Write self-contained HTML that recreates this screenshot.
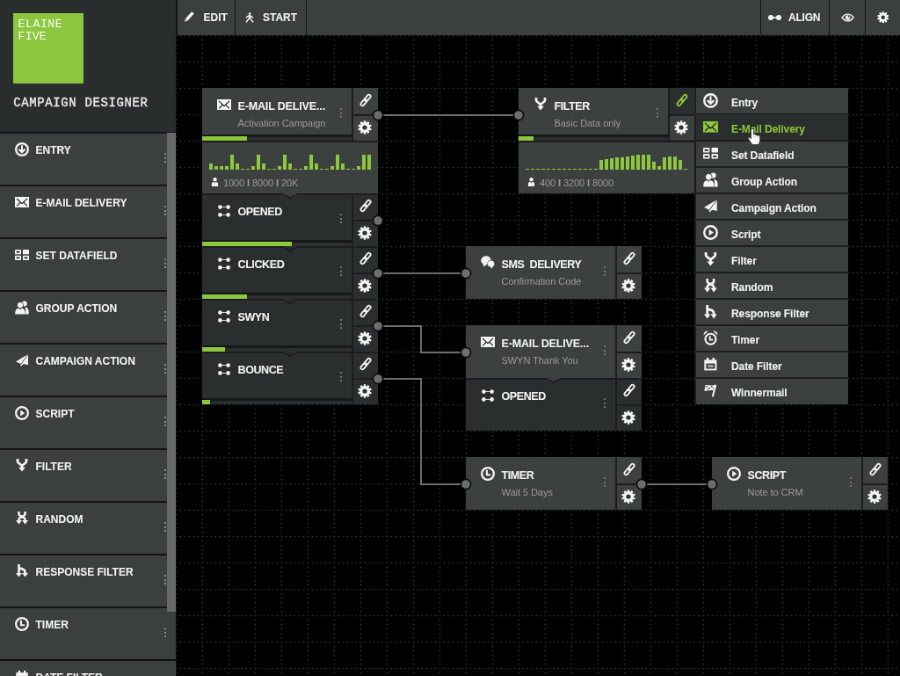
<!DOCTYPE html>
<html><head><meta charset="utf-8"><style>
html,body{margin:0;padding:0;width:900px;height:676px;overflow:hidden;background:#000}
#root{position:absolute;left:0;top:0;width:1024px;height:770px;transform:scale(0.87890625);transform-origin:0 0;will-change:transform;background:#000;font-family:"Liberation Sans",sans-serif}
.r,.t,.i{position:absolute}
.t{white-space:nowrap;line-height:1}
.b{-webkit-text-stroke:0.1px currentColor;text-shadow:0 0 1.2px rgba(0,0,0,.4)}
.i{overflow:visible}
</style></head><body>

<svg width="0" height="0" style="position:absolute">
<defs>
<symbol id="entry" viewBox="0 0 16 16"><circle cx="8" cy="8" r="6.85" fill="none" stroke="currentColor" stroke-width="2.3"/><path d="M8 3.2V11.2" fill="none" stroke="currentColor" stroke-width="2"/><path d="M4.4 7.7L8 11.3L11.6 7.7" fill="none" stroke="currentColor" stroke-width="2.2" stroke-linejoin="miter"/></symbol>
<symbol id="mail" viewBox="0 0 16 12"><rect x="0" y="0" width="16" height="12" fill="currentColor"/><path d="M2 1.8L8 7.6L14 1.8M2.2 10.4L6.2 6.2M13.8 10.4L9.8 6.2" fill="none" stroke="#1e1e1e" stroke-width="1.15"/></symbol>
<symbol id="datafield" viewBox="0 0 16 12"><g fill="currentColor"><rect x="0" y="0" width="7" height="5.3" rx="0.6"/><rect x="9" y="0" width="7" height="5.3" rx="0.6"/><rect x="0" y="6.7" width="7" height="5.3" rx="0.6"/><rect x="9" y="6.7" width="7" height="5.3" rx="0.6"/></g><g fill="#333736"><rect x="1.6" y="1.7" width="3.8" height="1.9"/><rect x="1.6" y="8.4" width="3.8" height="1.9"/><rect x="10.6" y="8.4" width="3.8" height="1.9"/></g></symbol>
<symbol id="group" viewBox="0 0 16 16"><g fill="currentColor"><circle cx="10.8" cy="3.4" r="3"/><path d="M11.5 7.8C14.5 7.8 15.8 9.5 15.8 15.5H12.2V10Z"/></g><circle cx="6" cy="5" r="3.8" fill="#3b3f3e"/><g fill="currentColor"><circle cx="6" cy="5" r="3.1"/><path d="M0.2 15.6C0.2 10.2 1.5 8.8 6 8.8S11.8 10.2 11.8 15.6Z"/></g><path d="M4.8 9L6 10.6L7.2 9Z" fill="#3b3f3e"/></symbol>
<symbol id="plane" viewBox="0 0 14 14"><path d="M0 8.6L14 0V12.2L8.8 11L5.8 14L4.8 10.6Z" fill="currentColor"/><path d="M14 0L5.3 12" stroke="#3b3f3e" stroke-width="0.9"/></symbol>
<symbol id="script" viewBox="0 0 16 16"><circle cx="8" cy="8" r="6.85" fill="none" stroke="currentColor" stroke-width="2.3"/><path d="M6.2 4.6V11.4L11.3 8Z" fill="currentColor"/></symbol>
<symbol id="filter" viewBox="0 0 14 15"><path d="M2 0V3C2 5.6 7 6.2 7 8.8V12.2M12 0V3C12 5.6 7 6.2 7 8.8" fill="none" stroke="currentColor" stroke-width="2.7"/><path d="M3.2 9.8L7 14.6L10.8 9.8Z" fill="currentColor"/></symbol>
<symbol id="random" viewBox="0 0 14 15"><path d="M3.5 0V3C3.5 5.6 10.5 6.2 10.5 8.8V11.5M10.5 0V3C10.5 5.6 3.5 6.2 3.5 8.8V11.5" fill="none" stroke="currentColor" stroke-width="2.5"/><path d="M0 10L3.5 14.6L7 10ZM7 10L10.5 14.6L14 10Z" fill="currentColor"/></symbol>
<symbol id="response" viewBox="0 0 14 15"><path d="M3.5 0V11.5M3.5 4.6C8.5 5 10.5 6.4 10.5 8.8V11.5" fill="none" stroke="currentColor" stroke-width="2.6"/><path d="M0 10L3.5 14.6L7 10ZM7 10L10.5 14.6L14 10Z" fill="currentColor"/></symbol>
<symbol id="timer" viewBox="0 0 16 16"><circle cx="8" cy="8" r="6.85" fill="none" stroke="currentColor" stroke-width="2.3"/><path d="M6.9 3.8V9.3H11.2" fill="none" stroke="currentColor" stroke-width="2.1"/></symbol>
<symbol id="alarm" viewBox="0 0 16 16"><circle cx="8" cy="9.2" r="5.7" fill="none" stroke="currentColor" stroke-width="2"/><path d="M7.3 6V10H10.6" fill="none" stroke="currentColor" stroke-width="1.8"/><path d="M0.6 5.2A4 4 0 0 1 5.2 0.6Z M15.4 5.2A4 4 0 0 0 10.8 0.6Z" fill="currentColor"/></symbol>
<symbol id="calendar" viewBox="0 0 14 14"><rect x="0.3" y="2.2" width="13.4" height="11.5" fill="currentColor"/><rect x="2.8" y="0" width="2.2" height="3" fill="currentColor"/><rect x="9" y="0" width="2.2" height="3" fill="currentColor"/><rect x="2.2" y="6.2" width="9.6" height="5.6" fill="#3b3f3e"/><rect x="4" y="7.6" width="6" height="2.8" fill="currentColor" opacity="0.55"/></symbol>
<symbol id="winner" viewBox="0 0 14 14"><path d="M1.4 1.2C3.5 0.6 5.5 1.4 7.5 1.4S11 0.8 12.8 0.6L11.4 6.4C9.6 6.8 8 6.4 6.3 6.6S3 7.2 0.4 7.5Z" fill="currentColor"/><g fill="#3b3f3e"><rect x="2.2" y="2" width="1.5" height="1.5"/><rect x="5" y="3.6" width="1.5" height="1.5"/><rect x="7.6" y="2.2" width="1.5" height="1.5"/><rect x="9.6" y="4" width="1.3" height="1.3"/><rect x="3" y="5.2" width="1.2" height="1.2"/></g><path d="M12.6 0.8L9.2 13.6" stroke="currentColor" stroke-width="1.9"/></symbol>
<symbol id="link" viewBox="0 0 20 20"><g transform="rotate(-50 10 10)" fill="none" stroke="currentColor" stroke-width="2"><rect x="1.5" y="7.9" width="9.3" height="4.2" rx="2.1"/><rect x="9.2" y="7.9" width="9.3" height="4.2" rx="2.1"/></g></symbol>
<symbol id="gear" viewBox="0 0 16 16"><g fill="currentColor"><circle cx="8" cy="8" r="5.9"/><rect x="6.75" y="0.3" width="2.5" height="15.4" transform="rotate(0 8 8)"/><rect x="6.75" y="0.3" width="2.5" height="15.4" transform="rotate(36 8 8)"/><rect x="6.75" y="0.3" width="2.5" height="15.4" transform="rotate(72 8 8)"/><rect x="6.75" y="0.3" width="2.5" height="15.4" transform="rotate(108 8 8)"/><rect x="6.75" y="0.3" width="2.5" height="15.4" transform="rotate(144 8 8)"/></g><circle cx="8" cy="8" r="2.6" fill="#2f3332"/></symbol>
<symbol id="opened" viewBox="0 0 14 14"><g fill="currentColor"><circle cx="2.4" cy="2.6" r="2.3"/><circle cx="11.6" cy="2.6" r="2.3"/><circle cx="2.4" cy="11.4" r="2.3"/><circle cx="11.6" cy="11.4" r="2.3"/><rect x="2.5" y="2.2" width="9" height="0.8"/><rect x="2.5" y="11" width="9" height="0.8"/></g></symbol>
<symbol id="sms" viewBox="0 0 16 15"><ellipse cx="6" cy="5.3" rx="5.7" ry="5" fill="currentColor"/><path d="M2.6 8.5L3.2 12.6L6.8 9.8Z" fill="currentColor"/><circle cx="11.6" cy="9" r="4.3" fill="#3c403f"/><ellipse cx="11.6" cy="9" rx="3.8" ry="3.6" fill="currentColor"/><path d="M10.5 11.5L12.6 14.8L14.2 10.8Z" fill="currentColor"/></symbol>
<symbol id="person" viewBox="0 0 10 11"><circle cx="5" cy="2.5" r="2.45" fill="currentColor"/><path d="M1 11V8C1 6.3 2.2 5.5 3.4 5.5H6.6C7.8 5.5 9 6.3 9 8V11Z" fill="currentColor"/><path d="M4 5.5L5 7.2L6 5.5Z" fill="#3c403f"/><path d="M4.7 7.6H5.3V9H4.7Z" fill="#3c403f" opacity="0.5"/></symbol>
<symbol id="pencil" viewBox="0 0 11 12"><path d="M8.2 0.3L10.8 2.6L3.6 10.4L0.3 11.7L1 8.2Z" fill="currentColor"/><path d="M1.2 8.6L3.4 10.6" stroke="#3b403f" stroke-width="0.7"/></symbol>
<symbol id="walker" viewBox="0 0 10 12"><circle cx="5.1" cy="1.5" r="1.35" fill="currentColor"/><path d="M5 2.8V6.6" stroke="currentColor" stroke-width="1.9"/><path d="M4.8 3.6L0.9 5.8M5.2 3.6L8.9 6.2M4.9 6.3L1.1 11.3M5.1 6.3L9.1 11.4" fill="none" stroke="currentColor" stroke-width="1.5"/></symbol>
<symbol id="align" viewBox="0 0 15 6"><circle cx="3" cy="3" r="3" fill="currentColor"/><circle cx="12" cy="3" r="3" fill="currentColor"/><rect x="3" y="2.2" width="9" height="1.6" fill="currentColor"/></symbol>
<symbol id="eye" viewBox="0 0 16 10"><path d="M0.2 5C3 0.9 5.6 0.2 8 0.2S13 0.9 15.8 5C13 9.1 10.4 9.8 8 9.8S3 9.1 0.2 5Z" fill="currentColor"/><path d="M2.2 5C4.4 2.1 6.2 1.7 8 1.7S11.6 2.1 13.8 5C11.6 7.9 9.8 8.3 8 8.3S4.4 7.9 2.2 5Z" fill="#3b403f"/><circle cx="8" cy="5" r="2.9" fill="currentColor"/><circle cx="9.2" cy="3.9" r="1" fill="#3b403f"/></symbol>
<symbol id="hand" viewBox="0 0 14 18" preserveAspectRatio="none"><path d="M3.3 1.5C3.3 0 6.1 0 6.1 1.5V6.9C6.1 5.8 8.3 5.8 8.3 6.9V7.6C8.3 6.6 10.4 6.6 10.4 7.6V8.4C10.4 7.4 12.7 7.4 12.7 8.6V13C12.7 15.5 11.3 17.6 9.2 17.6H6.2C4.8 17.6 3.9 16.6 2.9 15.1L0.5 11.3C-0.1 10.3 1 9.2 2 10L3.3 11.4Z" fill="#fff" stroke="#1a1a1a" stroke-width="0.6"/><path d="M6.1 7.2V10.5M8.3 7.7V10.5M10.4 8.5V10.5" stroke="#aaa" stroke-width="0.5"/></symbol>
</defs>
</svg>

<div id="root">
<div class="r" style="left:0px;top:0px;width:200px;height:150px;background:#2a2d2d;"></div>
<div class="r" style="left:15px;top:15px;width:80px;height:80px;background:#8dc63f;"></div>
<div class="t" style="left:20.60px;top:21.14px;font-size:13.3px;font-weight:normal;color:#f8faf4;letter-spacing:0.45px;font-family:'Liberation Mono',monospace;">ELAINE</div>
<div class="t" style="left:20.60px;top:34.94px;font-size:13.3px;font-weight:normal;color:#f8faf4;letter-spacing:0.1px;font-family:'Liberation Mono',monospace;">FIVE</div>
<div class="t" style="left:15.20px;top:110.05px;font-size:14px;font-weight:normal;color:#ececec;letter-spacing:0.62px;font-family:'Liberation Mono',monospace;-webkit-text-stroke:0.35px #ececec;">CAMPAIGN DESIGNER</div>
<div class="r" style="left:0px;top:150px;width:200px;height:60px;background:#3b3f3e;"></div>
<div class="r" style="left:0px;top:149.95px;width:200px;height:1.95px;background:#141616;"></div>
<svg class="i" style="left:17.1px;top:161.9px;width:16px;height:16px;color:#f4f4f4;" viewBox="0 0 16 16"><use href="#entry"/></svg>
<div class="t b" style="left:40.50px;top:165.34px;font-size:12px;font-weight:bold;color:#f4f4f4;letter-spacing:0px;">ENTRY</div>
<div class="r" style="left:186.5px;top:174.0px;width:2px;height:2px;background:#8a8d8c;"></div>
<div class="r" style="left:186.5px;top:178.6px;width:2px;height:2px;background:#8a8d8c;"></div>
<div class="r" style="left:186.5px;top:183.2px;width:2px;height:2px;background:#8a8d8c;"></div>
<div class="r" style="left:0px;top:210px;width:200px;height:60px;background:#3b3f3e;"></div>
<div class="r" style="left:0px;top:209.95px;width:200px;height:1.95px;background:#141616;"></div>
<svg class="i" style="left:17.1px;top:223.9px;width:16px;height:12px;color:#f4f4f4;" viewBox="0 0 16 12"><use href="#mail"/></svg>
<div class="t b" style="left:40.50px;top:225.34px;font-size:12px;font-weight:bold;color:#f4f4f4;letter-spacing:0px;">E-MAIL DELIVERY</div>
<div class="r" style="left:186.5px;top:234.0px;width:2px;height:2px;background:#8a8d8c;"></div>
<div class="r" style="left:186.5px;top:238.6px;width:2px;height:2px;background:#8a8d8c;"></div>
<div class="r" style="left:186.5px;top:243.2px;width:2px;height:2px;background:#8a8d8c;"></div>
<div class="r" style="left:0px;top:270px;width:200px;height:60px;background:#3b3f3e;"></div>
<div class="r" style="left:0px;top:269.95px;width:200px;height:1.95px;background:#141616;"></div>
<svg class="i" style="left:17.1px;top:283.9px;width:16px;height:12px;color:#f4f4f4;" viewBox="0 0 16 12"><use href="#datafield"/></svg>
<div class="t b" style="left:40.50px;top:285.34px;font-size:12px;font-weight:bold;color:#f4f4f4;letter-spacing:0px;">SET DATAFIELD</div>
<div class="r" style="left:186.5px;top:294.0px;width:2px;height:2px;background:#8a8d8c;"></div>
<div class="r" style="left:186.5px;top:298.6px;width:2px;height:2px;background:#8a8d8c;"></div>
<div class="r" style="left:186.5px;top:303.2px;width:2px;height:2px;background:#8a8d8c;"></div>
<div class="r" style="left:0px;top:330px;width:200px;height:60px;background:#3b3f3e;"></div>
<div class="r" style="left:0px;top:329.95px;width:200px;height:1.95px;background:#141616;"></div>
<svg class="i" style="left:17.1px;top:341.9px;width:16px;height:16px;color:#f4f4f4;" viewBox="0 0 16 16"><use href="#group"/></svg>
<div class="t b" style="left:40.50px;top:345.34px;font-size:12px;font-weight:bold;color:#f4f4f4;letter-spacing:0px;">GROUP ACTION</div>
<div class="r" style="left:186.5px;top:354.0px;width:2px;height:2px;background:#8a8d8c;"></div>
<div class="r" style="left:186.5px;top:358.6px;width:2px;height:2px;background:#8a8d8c;"></div>
<div class="r" style="left:186.5px;top:363.2px;width:2px;height:2px;background:#8a8d8c;"></div>
<div class="r" style="left:0px;top:390px;width:200px;height:60px;background:#3b3f3e;"></div>
<div class="r" style="left:0px;top:389.95px;width:200px;height:1.95px;background:#141616;"></div>
<svg class="i" style="left:18.1px;top:402.9px;width:14px;height:14px;color:#f4f4f4;" viewBox="0 0 14 14"><use href="#plane"/></svg>
<div class="t b" style="left:40.50px;top:405.34px;font-size:12px;font-weight:bold;color:#f4f4f4;letter-spacing:0px;">CAMPAIGN ACTION</div>
<div class="r" style="left:186.5px;top:414.0px;width:2px;height:2px;background:#8a8d8c;"></div>
<div class="r" style="left:186.5px;top:418.6px;width:2px;height:2px;background:#8a8d8c;"></div>
<div class="r" style="left:186.5px;top:423.2px;width:2px;height:2px;background:#8a8d8c;"></div>
<div class="r" style="left:0px;top:450px;width:200px;height:60px;background:#3b3f3e;"></div>
<div class="r" style="left:0px;top:449.95px;width:200px;height:1.95px;background:#141616;"></div>
<svg class="i" style="left:17.1px;top:461.9px;width:16px;height:16px;color:#f4f4f4;" viewBox="0 0 16 16"><use href="#script"/></svg>
<div class="t b" style="left:40.50px;top:465.34px;font-size:12px;font-weight:bold;color:#f4f4f4;letter-spacing:0px;">SCRIPT</div>
<div class="r" style="left:186.5px;top:474.0px;width:2px;height:2px;background:#8a8d8c;"></div>
<div class="r" style="left:186.5px;top:478.6px;width:2px;height:2px;background:#8a8d8c;"></div>
<div class="r" style="left:186.5px;top:483.2px;width:2px;height:2px;background:#8a8d8c;"></div>
<div class="r" style="left:0px;top:510px;width:200px;height:60px;background:#3b3f3e;"></div>
<div class="r" style="left:0px;top:509.95px;width:200px;height:1.95px;background:#141616;"></div>
<svg class="i" style="left:18.1px;top:522.4px;width:14px;height:15px;color:#f4f4f4;" viewBox="0 0 14 15"><use href="#filter"/></svg>
<div class="t b" style="left:40.50px;top:525.34px;font-size:12px;font-weight:bold;color:#f4f4f4;letter-spacing:0px;">FILTER</div>
<div class="r" style="left:186.5px;top:534.0px;width:2px;height:2px;background:#8a8d8c;"></div>
<div class="r" style="left:186.5px;top:538.6px;width:2px;height:2px;background:#8a8d8c;"></div>
<div class="r" style="left:186.5px;top:543.2px;width:2px;height:2px;background:#8a8d8c;"></div>
<div class="r" style="left:0px;top:570px;width:200px;height:60px;background:#3b3f3e;"></div>
<div class="r" style="left:0px;top:569.95px;width:200px;height:1.95px;background:#141616;"></div>
<svg class="i" style="left:18.1px;top:582.4px;width:14px;height:15px;color:#f4f4f4;" viewBox="0 0 14 15"><use href="#random"/></svg>
<div class="t b" style="left:40.50px;top:585.34px;font-size:12px;font-weight:bold;color:#f4f4f4;letter-spacing:0px;">RANDOM</div>
<div class="r" style="left:186.5px;top:594.0px;width:2px;height:2px;background:#8a8d8c;"></div>
<div class="r" style="left:186.5px;top:598.6px;width:2px;height:2px;background:#8a8d8c;"></div>
<div class="r" style="left:186.5px;top:603.2px;width:2px;height:2px;background:#8a8d8c;"></div>
<div class="r" style="left:0px;top:630px;width:200px;height:60px;background:#3b3f3e;"></div>
<div class="r" style="left:0px;top:629.95px;width:200px;height:1.95px;background:#141616;"></div>
<svg class="i" style="left:18.1px;top:642.4px;width:14px;height:15px;color:#f4f4f4;" viewBox="0 0 14 15"><use href="#response"/></svg>
<div class="t b" style="left:40.50px;top:645.34px;font-size:12px;font-weight:bold;color:#f4f4f4;letter-spacing:0px;">RESPONSE FILTER</div>
<div class="r" style="left:186.5px;top:654.0px;width:2px;height:2px;background:#8a8d8c;"></div>
<div class="r" style="left:186.5px;top:658.6px;width:2px;height:2px;background:#8a8d8c;"></div>
<div class="r" style="left:186.5px;top:663.2px;width:2px;height:2px;background:#8a8d8c;"></div>
<div class="r" style="left:0px;top:690px;width:200px;height:60px;background:#3b3f3e;"></div>
<div class="r" style="left:0px;top:689.95px;width:200px;height:1.95px;background:#141616;"></div>
<svg class="i" style="left:17.1px;top:701.9px;width:16px;height:16px;color:#f4f4f4;" viewBox="0 0 16 16"><use href="#timer"/></svg>
<div class="t b" style="left:40.50px;top:705.34px;font-size:12px;font-weight:bold;color:#f4f4f4;letter-spacing:0px;">TIMER</div>
<div class="r" style="left:186.5px;top:714.0px;width:2px;height:2px;background:#8a8d8c;"></div>
<div class="r" style="left:186.5px;top:718.6px;width:2px;height:2px;background:#8a8d8c;"></div>
<div class="r" style="left:186.5px;top:723.2px;width:2px;height:2px;background:#8a8d8c;"></div>
<div class="r" style="left:0px;top:750px;width:200px;height:60px;background:#3b3f3e;"></div>
<div class="r" style="left:0px;top:749.95px;width:200px;height:1.95px;background:#141616;"></div>
<svg class="i" style="left:18.1px;top:762.9px;width:14px;height:14px;color:#f4f4f4;" viewBox="0 0 14 14"><use href="#calendar"/></svg>
<div class="t b" style="left:40.50px;top:765.34px;font-size:12px;font-weight:bold;color:#f4f4f4;letter-spacing:0px;">DATE FILTER</div>
<div class="r" style="left:186.5px;top:774.0px;width:2px;height:2px;background:#8a8d8c;"></div>
<div class="r" style="left:186.5px;top:778.6px;width:2px;height:2px;background:#8a8d8c;"></div>
<div class="r" style="left:186.5px;top:783.2px;width:2px;height:2px;background:#8a8d8c;"></div>
<div class="r" style="left:190px;top:151.2px;width:10px;height:545px;background:#666968;"></div>
<div class="r" style="left:200px;top:0px;width:824px;height:40px;background:#3b403f;"></div>
<div class="r" style="left:200px;top:0px;width:1.5px;height:40px;background:#121414;"></div>
<div class="r" style="left:267.2px;top:0px;width:1.3px;height:40px;background:#121414;"></div>
<div class="r" style="left:348.2px;top:0px;width:1.3px;height:40px;background:#121414;"></div>
<div class="r" style="left:865.2px;top:0px;width:1.3px;height:40px;background:#121414;"></div>
<div class="r" style="left:943.2px;top:0px;width:1.3px;height:40px;background:#121414;"></div>
<div class="r" style="left:984.2px;top:0px;width:1.3px;height:40px;background:#121414;"></div>
<svg class="i" style="left:210px;top:13.3px;width:11px;height:12px;color:#f4f4f4;" viewBox="0 0 11 12"><use href="#pencil"/></svg>
<div class="t b" style="left:231.50px;top:13.84px;font-size:12px;font-weight:bold;color:#f4f4f4;letter-spacing:0px;">EDIT</div>
<svg class="i" style="left:278.6px;top:14.2px;width:10px;height:12px;color:#f4f4f4;" viewBox="0 0 10 12"><use href="#walker"/></svg>
<div class="t b" style="left:299.00px;top:13.84px;font-size:12px;font-weight:bold;color:#f4f4f4;letter-spacing:0px;">START</div>
<svg class="i" style="left:874px;top:16.5px;width:15px;height:6px;color:#f4f4f4;" viewBox="0 0 15 6"><use href="#align"/></svg>
<div class="t b" style="left:897.00px;top:13.84px;font-size:12px;font-weight:bold;color:#f4f4f4;letter-spacing:-0.2px;">ALIGN</div>
<svg class="i" style="left:956.8px;top:15px;width:15.2px;height:10px;color:#f4f4f4;" viewBox="0 0 15.2 10"><use href="#eye"/></svg>
<svg class="i" style="left:998px;top:12.8px;width:13.5px;height:13.5px;color:#f4f4f4;" viewBox="0 0 13.5 13.5"><use href="#gear"/></svg>
<svg class="i" style="left:200px;top:40px;width:824px;height:728px" viewBox="0 0 824 728"><defs><pattern id="grid" x="-0.3" y="-0.1" width="30" height="30" patternUnits="userSpaceOnUse"><rect x="0" y="0" width="1.25" height="1.25" fill="#4a4f4d"/><rect x="5" y="0" width="1.25" height="1.25" fill="#4a4f4d"/><rect x="10" y="0" width="1.25" height="1.25" fill="#4a4f4d"/><rect x="15" y="0" width="1.25" height="1.25" fill="#4a4f4d"/><rect x="20" y="0" width="1.25" height="1.25" fill="#4a4f4d"/><rect x="25" y="0" width="1.25" height="1.25" fill="#4a4f4d"/><rect x="0" y="5" width="1.25" height="1.25" fill="#4a4f4d"/><rect x="0" y="10" width="1.25" height="1.25" fill="#4a4f4d"/><rect x="0" y="15" width="1.25" height="1.25" fill="#4a4f4d"/><rect x="0" y="20" width="1.25" height="1.25" fill="#4a4f4d"/><rect x="0" y="25" width="1.25" height="1.25" fill="#4a4f4d"/></pattern></defs><rect x="0" y="0" width="824" height="728" fill="url(#grid)"/></svg>
<svg class="i" style="left:0.4px;top:0.8px;width:1024px;height:768px" viewBox="0 0 1024 768"><path d="M430 130H590" fill="none" stroke="#6b6e6d" stroke-width="2"/><path d="M430 310H530" fill="none" stroke="#6b6e6d" stroke-width="2"/><path d="M430 370H479V400H530" fill="none" stroke="#6b6e6d" stroke-width="2"/><path d="M430 430H479V550H530" fill="none" stroke="#6b6e6d" stroke-width="2"/><path d="M730 550H810" fill="none" stroke="#6b6e6d" stroke-width="2"/></svg>
<div class="r" style="left:230px;top:100px;width:200px;height:60px;background:#3c403f;"></div>
<svg class="i" style="left:247.0px;top:112.8px;width:16px;height:12px;color:#f4f4f4;" viewBox="0 0 16 12"><use href="#mail"/></svg>
<div class="t b" style="left:270.50px;top:114.52px;font-size:12.5px;font-weight:bold;color:#f4f4f4;letter-spacing:-0.15px;">E-MAIL DELIVE...</div>
<div class="t" style="left:270.50px;top:134.69px;font-size:11px;font-weight:normal;color:#9a9c9b;letter-spacing:-0.05px;">Activation Campaign</div>
<div class="r" style="left:386.5px;top:123.2px;width:2px;height:2px;background:#727574;"></div>
<div class="r" style="left:386.5px;top:127.8px;width:2px;height:2px;background:#727574;"></div>
<div class="r" style="left:386.5px;top:132.4px;width:2px;height:2px;background:#727574;"></div>
<div class="r" style="left:230px;top:153.2px;width:170px;height:2.4px;background:#151818;"></div>
<div class="r" style="left:230px;top:155.6px;width:170px;height:4.4px;background:#2c2f2f;"></div>
<div class="r" style="left:230px;top:155.2px;width:51.0px;height:4.8px;background:#8dc63f;"></div>
<div class="r" style="left:400px;top:100px;width:1.6px;height:60px;background:#1c1e1e;"></div>
<div class="r" style="left:401.6px;top:129.8px;width:28.4px;height:1.8px;background:#1c1e1e;"></div>
<svg class="i" style="left:406.7px;top:104.6px;width:18px;height:18px;color:#f4f4f4;" viewBox="0 0 18 18"><use href="#link"/></svg>
<svg class="i" style="left:407.2px;top:137px;width:16px;height:16px;color:#f4f4f4;" viewBox="0 0 16 16"><use href="#gear"/></svg>
<div class="r" style="left:230px;top:160px;width:200px;height:60px;background:#3c403f;"></div>
<div class="r" style="left:230px;top:159.8px;width:200px;height:1.8px;background:#1c1e1e;"></div>
<div class="r" style="left:238.4px;top:186.0px;width:4.0px;height:7.2px;background:#8dc63f;"></div>
<div class="r" style="left:244.4px;top:189.2px;width:4.0px;height:4px;background:#8dc63f;"></div>
<div class="r" style="left:250.4px;top:189.2px;width:4.0px;height:4px;background:#8dc63f;"></div>
<div class="r" style="left:256.4px;top:189.2px;width:4.0px;height:4px;background:#8dc63f;"></div>
<div class="r" style="left:262.4px;top:176.2px;width:4.0px;height:17px;background:#8dc63f;"></div>
<div class="r" style="left:268.4px;top:186.0px;width:4.0px;height:7.2px;background:#8dc63f;"></div>
<div class="r" style="left:274.4px;top:191.7px;width:4.0px;height:1.5px;background:#8dc63f;"></div>
<div class="r" style="left:280.4px;top:191.7px;width:4.0px;height:1.5px;background:#8dc63f;"></div>
<div class="r" style="left:286.4px;top:189.2px;width:4.0px;height:4px;background:#8dc63f;"></div>
<div class="r" style="left:292.4px;top:176.2px;width:4.0px;height:17px;background:#8dc63f;"></div>
<div class="r" style="left:298.4px;top:186.0px;width:4.0px;height:7.2px;background:#8dc63f;"></div>
<div class="r" style="left:304.4px;top:191.7px;width:4.0px;height:1.5px;background:#8dc63f;"></div>
<div class="r" style="left:310.4px;top:191.7px;width:4.0px;height:1.5px;background:#8dc63f;"></div>
<div class="r" style="left:316.4px;top:189.2px;width:4.0px;height:4px;background:#8dc63f;"></div>
<div class="r" style="left:322.4px;top:176.2px;width:4.0px;height:17px;background:#8dc63f;"></div>
<div class="r" style="left:328.4px;top:186.0px;width:4.0px;height:7.2px;background:#8dc63f;"></div>
<div class="r" style="left:334.4px;top:191.7px;width:4.0px;height:1.5px;background:#8dc63f;"></div>
<div class="r" style="left:340.4px;top:191.7px;width:4.0px;height:1.5px;background:#8dc63f;"></div>
<div class="r" style="left:346.4px;top:189.2px;width:4.0px;height:4px;background:#8dc63f;"></div>
<div class="r" style="left:352.4px;top:176.2px;width:4.0px;height:17px;background:#8dc63f;"></div>
<div class="r" style="left:358.4px;top:186.0px;width:4.0px;height:7.2px;background:#8dc63f;"></div>
<div class="r" style="left:364.4px;top:191.7px;width:4.0px;height:1.5px;background:#8dc63f;"></div>
<div class="r" style="left:370.4px;top:191.7px;width:4.0px;height:1.5px;background:#8dc63f;"></div>
<div class="r" style="left:376.4px;top:189.2px;width:4.0px;height:4px;background:#8dc63f;"></div>
<div class="r" style="left:382.4px;top:176.2px;width:4.0px;height:17px;background:#8dc63f;"></div>
<div class="r" style="left:388.4px;top:186.0px;width:4.0px;height:7.2px;background:#8dc63f;"></div>
<div class="r" style="left:394.4px;top:191.7px;width:4.0px;height:1.5px;background:#8dc63f;"></div>
<div class="r" style="left:400.4px;top:191.7px;width:4.0px;height:1.5px;background:#8dc63f;"></div>
<div class="r" style="left:406.4px;top:189.2px;width:4.0px;height:4px;background:#8dc63f;"></div>
<div class="r" style="left:412.4px;top:176.2px;width:4.0px;height:17px;background:#8dc63f;"></div>
<div class="r" style="left:418.4px;top:176.2px;width:4.0px;height:17px;background:#8dc63f;"></div>
<svg class="i" style="left:239.6px;top:202.4px;width:9px;height:10px;color:#f4f4f4;" viewBox="0 0 9 10"><use href="#person"/></svg>
<div class="t" style="left:254.00px;top:202.99px;font-size:11px;font-weight:normal;color:#9a9c9b;letter-spacing:-0.1px;">1000 <b>I</b> 8000 <b>I</b> 20K</div>
<div class="r" style="left:230px;top:220px;width:200px;height:60px;background:#2b2e2e;"></div>
<svg class="i" style="left:248.0px;top:232.8px;width:14px;height:14px;color:#f4f4f4;" viewBox="0 0 14 14"><use href="#opened"/></svg>
<div class="t b" style="left:270.50px;top:234.52px;font-size:12.5px;font-weight:bold;color:#f4f4f4;letter-spacing:-0.4px;">OPENED</div>
<div class="r" style="left:386.5px;top:243.2px;width:2px;height:2px;background:#727574;"></div>
<div class="r" style="left:386.5px;top:247.79999999999998px;width:2px;height:2px;background:#727574;"></div>
<div class="r" style="left:386.5px;top:252.39999999999998px;width:2px;height:2px;background:#727574;"></div>
<div class="r" style="left:230px;top:273.2px;width:170px;height:2.4px;background:#151818;"></div>
<div class="r" style="left:230px;top:275.6px;width:170px;height:4.4px;background:#2c2f2f;"></div>
<div class="r" style="left:230px;top:275.2px;width:102.0px;height:4.8px;background:#8dc63f;"></div>
<div class="r" style="left:400px;top:220px;width:1.6px;height:60px;background:#1c1e1e;"></div>
<div class="r" style="left:401.6px;top:249.8px;width:28.4px;height:1.8px;background:#1c1e1e;"></div>
<svg class="i" style="left:406.7px;top:224.6px;width:18px;height:18px;color:#f4f4f4;" viewBox="0 0 18 18"><use href="#link"/></svg>
<svg class="i" style="left:407.2px;top:257px;width:16px;height:16px;color:#f4f4f4;" viewBox="0 0 16 16"><use href="#gear"/></svg>
<div class="r" style="left:230px;top:219.8px;width:200px;height:2px;background:#1c1e1e;"></div>
<svg class="i" style="left:321px;top:219.8px;width:18px;height:9px" viewBox="0 0 18 9"><path d="M2.5 0L9 4.8L15.5 0Z" fill="#3c403f"/><path d="M2.5 0.6L9 5.4L15.5 0.6" fill="none" stroke="#1c1e1e" stroke-width="1.7"/><rect x="2.5" y="0" width="13" height="1.9" fill="#3c403f"/></svg>
<div class="r" style="left:230px;top:280px;width:200px;height:60px;background:#2b2e2e;"></div>
<svg class="i" style="left:248.0px;top:292.8px;width:14px;height:14px;color:#f4f4f4;" viewBox="0 0 14 14"><use href="#opened"/></svg>
<div class="t b" style="left:270.50px;top:294.52px;font-size:12.5px;font-weight:bold;color:#f4f4f4;letter-spacing:-0.4px;">CLICKED</div>
<div class="r" style="left:386.5px;top:303.2px;width:2px;height:2px;background:#727574;"></div>
<div class="r" style="left:386.5px;top:307.8px;width:2px;height:2px;background:#727574;"></div>
<div class="r" style="left:386.5px;top:312.4px;width:2px;height:2px;background:#727574;"></div>
<div class="r" style="left:230px;top:333.2px;width:170px;height:2.4px;background:#151818;"></div>
<div class="r" style="left:230px;top:335.6px;width:170px;height:4.4px;background:#2c2f2f;"></div>
<div class="r" style="left:230px;top:335.2px;width:51.0px;height:4.8px;background:#8dc63f;"></div>
<div class="r" style="left:400px;top:280px;width:1.6px;height:60px;background:#1c1e1e;"></div>
<div class="r" style="left:401.6px;top:309.8px;width:28.4px;height:1.8px;background:#1c1e1e;"></div>
<svg class="i" style="left:406.7px;top:284.6px;width:18px;height:18px;color:#f4f4f4;" viewBox="0 0 18 18"><use href="#link"/></svg>
<svg class="i" style="left:407.2px;top:317px;width:16px;height:16px;color:#f4f4f4;" viewBox="0 0 16 16"><use href="#gear"/></svg>
<div class="r" style="left:230px;top:279.8px;width:200px;height:2px;background:#1c1e1e;"></div>
<svg class="i" style="left:321px;top:279.8px;width:18px;height:9px" viewBox="0 0 18 9"><path d="M2.5 0L9 4.8L15.5 0Z" fill="#2b2e2e"/><path d="M2.5 0.6L9 5.4L15.5 0.6" fill="none" stroke="#1c1e1e" stroke-width="1.7"/><rect x="2.5" y="0" width="13" height="1.9" fill="#2b2e2e"/></svg>
<div class="r" style="left:230px;top:340px;width:200px;height:60px;background:#2b2e2e;"></div>
<svg class="i" style="left:248.0px;top:352.8px;width:14px;height:14px;color:#f4f4f4;" viewBox="0 0 14 14"><use href="#opened"/></svg>
<div class="t b" style="left:270.50px;top:354.52px;font-size:12.5px;font-weight:bold;color:#f4f4f4;letter-spacing:-0.4px;">SWYN</div>
<div class="r" style="left:386.5px;top:363.2px;width:2px;height:2px;background:#727574;"></div>
<div class="r" style="left:386.5px;top:367.8px;width:2px;height:2px;background:#727574;"></div>
<div class="r" style="left:386.5px;top:372.4px;width:2px;height:2px;background:#727574;"></div>
<div class="r" style="left:230px;top:393.2px;width:170px;height:2.4px;background:#151818;"></div>
<div class="r" style="left:230px;top:395.6px;width:170px;height:4.4px;background:#2c2f2f;"></div>
<div class="r" style="left:230px;top:395.2px;width:25.5px;height:4.8px;background:#8dc63f;"></div>
<div class="r" style="left:400px;top:340px;width:1.6px;height:60px;background:#1c1e1e;"></div>
<div class="r" style="left:401.6px;top:369.8px;width:28.4px;height:1.8px;background:#1c1e1e;"></div>
<svg class="i" style="left:406.7px;top:344.6px;width:18px;height:18px;color:#f4f4f4;" viewBox="0 0 18 18"><use href="#link"/></svg>
<svg class="i" style="left:407.2px;top:377px;width:16px;height:16px;color:#f4f4f4;" viewBox="0 0 16 16"><use href="#gear"/></svg>
<div class="r" style="left:230px;top:339.8px;width:200px;height:2px;background:#1c1e1e;"></div>
<svg class="i" style="left:321px;top:339.8px;width:18px;height:9px" viewBox="0 0 18 9"><path d="M2.5 0L9 4.8L15.5 0Z" fill="#2b2e2e"/><path d="M2.5 0.6L9 5.4L15.5 0.6" fill="none" stroke="#1c1e1e" stroke-width="1.7"/><rect x="2.5" y="0" width="13" height="1.9" fill="#2b2e2e"/></svg>
<div class="r" style="left:230px;top:400px;width:200px;height:60px;background:#2b2e2e;"></div>
<svg class="i" style="left:248.0px;top:412.8px;width:14px;height:14px;color:#f4f4f4;" viewBox="0 0 14 14"><use href="#opened"/></svg>
<div class="t b" style="left:270.50px;top:414.52px;font-size:12.5px;font-weight:bold;color:#f4f4f4;letter-spacing:-0.4px;">BOUNCE</div>
<div class="r" style="left:386.5px;top:423.2px;width:2px;height:2px;background:#727574;"></div>
<div class="r" style="left:386.5px;top:427.8px;width:2px;height:2px;background:#727574;"></div>
<div class="r" style="left:386.5px;top:432.4px;width:2px;height:2px;background:#727574;"></div>
<div class="r" style="left:230px;top:453.2px;width:170px;height:2.4px;background:#151818;"></div>
<div class="r" style="left:230px;top:455.6px;width:170px;height:4.4px;background:#2c2f2f;"></div>
<div class="r" style="left:230px;top:455.2px;width:8.5px;height:4.8px;background:#8dc63f;"></div>
<div class="r" style="left:400px;top:400px;width:1.6px;height:60px;background:#1c1e1e;"></div>
<div class="r" style="left:401.6px;top:429.8px;width:28.4px;height:1.8px;background:#1c1e1e;"></div>
<svg class="i" style="left:406.7px;top:404.6px;width:18px;height:18px;color:#f4f4f4;" viewBox="0 0 18 18"><use href="#link"/></svg>
<svg class="i" style="left:407.2px;top:437px;width:16px;height:16px;color:#f4f4f4;" viewBox="0 0 16 16"><use href="#gear"/></svg>
<div class="r" style="left:230px;top:399.8px;width:200px;height:2px;background:#1c1e1e;"></div>
<svg class="i" style="left:321px;top:399.8px;width:18px;height:9px" viewBox="0 0 18 9"><path d="M2.5 0L9 4.8L15.5 0Z" fill="#2b2e2e"/><path d="M2.5 0.6L9 5.4L15.5 0.6" fill="none" stroke="#1c1e1e" stroke-width="1.7"/><rect x="2.5" y="0" width="13" height="1.9" fill="#2b2e2e"/></svg>
<div class="r" style="left:590px;top:100px;width:200px;height:60px;background:#3c403f;"></div>
<svg class="i" style="left:608.0px;top:111.3px;width:14px;height:15px;color:#f4f4f4;" viewBox="0 0 14 15"><use href="#filter"/></svg>
<div class="t b" style="left:630.50px;top:114.52px;font-size:12.5px;font-weight:bold;color:#f4f4f4;letter-spacing:-0.4px;">FILTER</div>
<div class="t" style="left:630.50px;top:134.69px;font-size:11px;font-weight:normal;color:#9a9c9b;letter-spacing:-0.05px;">Basic Data only</div>
<div class="r" style="left:746.5px;top:123.2px;width:2px;height:2px;background:#727574;"></div>
<div class="r" style="left:746.5px;top:127.8px;width:2px;height:2px;background:#727574;"></div>
<div class="r" style="left:746.5px;top:132.4px;width:2px;height:2px;background:#727574;"></div>
<div class="r" style="left:590px;top:153.2px;width:170px;height:2.4px;background:#151818;"></div>
<div class="r" style="left:590px;top:155.6px;width:170px;height:4.4px;background:#2c2f2f;"></div>
<div class="r" style="left:590px;top:155.2px;width:17.0px;height:4.8px;background:#8dc63f;"></div>
<div class="r" style="left:760px;top:100px;width:1.6px;height:60px;background:#1c1e1e;"></div>
<div class="r" style="left:761.6px;top:100px;width:28.4px;height:30px;background:#2b2e2e;"></div>
<div class="r" style="left:761.6px;top:129.8px;width:28.4px;height:1.8px;background:#1c1e1e;"></div>
<svg class="i" style="left:766.7px;top:104.6px;width:18px;height:18px;color:#8dc63f;" viewBox="0 0 18 18"><use href="#link"/></svg>
<svg class="i" style="left:767.2px;top:137px;width:16px;height:16px;color:#f4f4f4;" viewBox="0 0 16 16"><use href="#gear"/></svg>
<div class="r" style="left:590px;top:160px;width:200px;height:60px;background:#3c403f;"></div>
<div class="r" style="left:590px;top:159.8px;width:200px;height:1.8px;background:#1c1e1e;"></div>
<div class="r" style="left:598.4px;top:191.7px;width:4.0px;height:1.5px;background:#8dc63f;"></div>
<div class="r" style="left:604.4px;top:191.7px;width:4.0px;height:1.5px;background:#8dc63f;"></div>
<div class="r" style="left:610.4px;top:191.7px;width:4.0px;height:1.5px;background:#8dc63f;"></div>
<div class="r" style="left:616.4px;top:191.7px;width:4.0px;height:1.5px;background:#8dc63f;"></div>
<div class="r" style="left:622.4px;top:191.7px;width:4.0px;height:1.5px;background:#8dc63f;"></div>
<div class="r" style="left:628.4px;top:191.7px;width:4.0px;height:1.5px;background:#8dc63f;"></div>
<div class="r" style="left:634.4px;top:191.7px;width:4.0px;height:1.5px;background:#8dc63f;"></div>
<div class="r" style="left:640.4px;top:191.7px;width:4.0px;height:1.5px;background:#8dc63f;"></div>
<div class="r" style="left:646.4px;top:191.7px;width:4.0px;height:1.5px;background:#8dc63f;"></div>
<div class="r" style="left:652.4px;top:191.7px;width:4.0px;height:1.5px;background:#8dc63f;"></div>
<div class="r" style="left:658.4px;top:191.7px;width:4.0px;height:1.5px;background:#8dc63f;"></div>
<div class="r" style="left:664.4px;top:191.7px;width:4.0px;height:1.5px;background:#8dc63f;"></div>
<div class="r" style="left:670.4px;top:191.7px;width:4.0px;height:1.5px;background:#8dc63f;"></div>
<div class="r" style="left:676.4px;top:191.7px;width:4.0px;height:1.5px;background:#8dc63f;"></div>
<div class="r" style="left:682.4px;top:181.79999999999998px;width:4.0px;height:11.4px;background:#8dc63f;"></div>
<div class="r" style="left:688.4px;top:180.79999999999998px;width:4.0px;height:12.4px;background:#8dc63f;"></div>
<div class="r" style="left:694.4px;top:179.7px;width:4.0px;height:13.5px;background:#8dc63f;"></div>
<div class="r" style="left:700.4px;top:178.7px;width:4.0px;height:14.5px;background:#8dc63f;"></div>
<div class="r" style="left:706.4px;top:178.7px;width:4.0px;height:14.5px;background:#8dc63f;"></div>
<div class="r" style="left:712.4px;top:177.79999999999998px;width:4.0px;height:15.4px;background:#8dc63f;"></div>
<div class="r" style="left:718.4px;top:176.79999999999998px;width:4.0px;height:16.4px;background:#8dc63f;"></div>
<div class="r" style="left:724.4px;top:175.79999999999998px;width:4.0px;height:17.4px;background:#8dc63f;"></div>
<div class="r" style="left:730.4px;top:175.79999999999998px;width:4.0px;height:17.4px;background:#8dc63f;"></div>
<div class="r" style="left:736.4px;top:175.79999999999998px;width:4.0px;height:17.4px;background:#8dc63f;"></div>
<div class="r" style="left:742.4px;top:184.0px;width:4.0px;height:9.2px;background:#8dc63f;"></div>
<div class="r" style="left:748.4px;top:188.5px;width:4.0px;height:4.7px;background:#8dc63f;"></div>
<div class="r" style="left:754.4px;top:178.7px;width:4.0px;height:14.5px;background:#8dc63f;"></div>
<div class="r" style="left:760.4px;top:177.79999999999998px;width:4.0px;height:15.4px;background:#8dc63f;"></div>
<div class="r" style="left:766.4px;top:177.79999999999998px;width:4.0px;height:15.4px;background:#8dc63f;"></div>
<div class="r" style="left:772.4px;top:181.79999999999998px;width:4.0px;height:11.4px;background:#8dc63f;"></div>
<div class="r" style="left:778.4px;top:191.7px;width:4.0px;height:1.5px;background:#8dc63f;"></div>
<svg class="i" style="left:599.6px;top:202.4px;width:9px;height:10px;color:#f4f4f4;" viewBox="0 0 9 10"><use href="#person"/></svg>
<div class="t" style="left:614.00px;top:202.99px;font-size:11px;font-weight:normal;color:#9a9c9b;letter-spacing:-0.1px;">400 <b>I</b> 3200 <b>I</b> 8000</div>
<div class="r" style="left:530px;top:280px;width:200px;height:60px;background:#3c403f;"></div>
<svg class="i" style="left:547.0px;top:291.3px;width:16px;height:15px;color:#f4f4f4;" viewBox="0 0 16 15"><use href="#sms"/></svg>
<div class="t b" style="left:570.50px;top:294.52px;font-size:12.5px;font-weight:bold;color:#f4f4f4;letter-spacing:-0.4px;">SMS&nbsp; DELIVERY</div>
<div class="t" style="left:570.50px;top:314.69px;font-size:11px;font-weight:normal;color:#9a9c9b;letter-spacing:-0.05px;">Confirmation Code</div>
<div class="r" style="left:686.5px;top:303.2px;width:2px;height:2px;background:#727574;"></div>
<div class="r" style="left:686.5px;top:307.8px;width:2px;height:2px;background:#727574;"></div>
<div class="r" style="left:686.5px;top:312.4px;width:2px;height:2px;background:#727574;"></div>
<div class="r" style="left:700px;top:280px;width:1.6px;height:60px;background:#1c1e1e;"></div>
<div class="r" style="left:701.6px;top:309.8px;width:28.4px;height:1.8px;background:#1c1e1e;"></div>
<svg class="i" style="left:706.7px;top:284.6px;width:18px;height:18px;color:#f4f4f4;" viewBox="0 0 18 18"><use href="#link"/></svg>
<svg class="i" style="left:707.2px;top:317px;width:16px;height:16px;color:#f4f4f4;" viewBox="0 0 16 16"><use href="#gear"/></svg>
<div class="r" style="left:530px;top:370px;width:200px;height:60px;background:#3c403f;"></div>
<svg class="i" style="left:547.0px;top:382.8px;width:16px;height:12px;color:#f4f4f4;" viewBox="0 0 16 12"><use href="#mail"/></svg>
<div class="t b" style="left:570.50px;top:384.52px;font-size:12.5px;font-weight:bold;color:#f4f4f4;letter-spacing:-0.15px;">E-MAIL DELIVE...</div>
<div class="t" style="left:570.50px;top:404.69px;font-size:11px;font-weight:normal;color:#9a9c9b;letter-spacing:-0.05px;">SWYN Thank You</div>
<div class="r" style="left:686.5px;top:393.2px;width:2px;height:2px;background:#727574;"></div>
<div class="r" style="left:686.5px;top:397.8px;width:2px;height:2px;background:#727574;"></div>
<div class="r" style="left:686.5px;top:402.4px;width:2px;height:2px;background:#727574;"></div>
<div class="r" style="left:700px;top:370px;width:1.6px;height:60px;background:#1c1e1e;"></div>
<div class="r" style="left:701.6px;top:399.8px;width:28.4px;height:1.8px;background:#1c1e1e;"></div>
<svg class="i" style="left:706.7px;top:374.6px;width:18px;height:18px;color:#f4f4f4;" viewBox="0 0 18 18"><use href="#link"/></svg>
<svg class="i" style="left:707.2px;top:407px;width:16px;height:16px;color:#f4f4f4;" viewBox="0 0 16 16"><use href="#gear"/></svg>
<div class="r" style="left:530px;top:430px;width:200px;height:60px;background:#2b2e2e;"></div>
<svg class="i" style="left:548.0px;top:442.8px;width:14px;height:14px;color:#f4f4f4;" viewBox="0 0 14 14"><use href="#opened"/></svg>
<div class="t b" style="left:570.50px;top:444.52px;font-size:12.5px;font-weight:bold;color:#f4f4f4;letter-spacing:-0.4px;">OPENED</div>
<div class="r" style="left:686.5px;top:453.2px;width:2px;height:2px;background:#727574;"></div>
<div class="r" style="left:686.5px;top:457.8px;width:2px;height:2px;background:#727574;"></div>
<div class="r" style="left:686.5px;top:462.4px;width:2px;height:2px;background:#727574;"></div>
<div class="r" style="left:700px;top:430px;width:1.6px;height:60px;background:#1c1e1e;"></div>
<div class="r" style="left:701.6px;top:459.8px;width:28.4px;height:1.8px;background:#1c1e1e;"></div>
<svg class="i" style="left:706.7px;top:434.6px;width:18px;height:18px;color:#f4f4f4;" viewBox="0 0 18 18"><use href="#link"/></svg>
<svg class="i" style="left:707.2px;top:467px;width:16px;height:16px;color:#f4f4f4;" viewBox="0 0 16 16"><use href="#gear"/></svg>
<div class="r" style="left:530px;top:429.8px;width:200px;height:2px;background:#1c1e1e;"></div>
<svg class="i" style="left:621px;top:429.8px;width:18px;height:9px" viewBox="0 0 18 9"><path d="M2.5 0L9 4.8L15.5 0Z" fill="#3c403f"/><path d="M2.5 0.6L9 5.4L15.5 0.6" fill="none" stroke="#1c1e1e" stroke-width="1.7"/><rect x="2.5" y="0" width="13" height="1.9" fill="#3c403f"/></svg>
<div class="r" style="left:530px;top:520px;width:200px;height:60px;background:#3c403f;"></div>
<svg class="i" style="left:547.0px;top:530.8px;width:16px;height:16px;color:#f4f4f4;" viewBox="0 0 16 16"><use href="#timer"/></svg>
<div class="t b" style="left:570.50px;top:534.52px;font-size:12.5px;font-weight:bold;color:#f4f4f4;letter-spacing:-0.4px;">TIMER</div>
<div class="t" style="left:570.50px;top:554.69px;font-size:11px;font-weight:normal;color:#9a9c9b;letter-spacing:-0.05px;">Wait 5 Days</div>
<div class="r" style="left:686.5px;top:543.2px;width:2px;height:2px;background:#727574;"></div>
<div class="r" style="left:686.5px;top:547.8000000000001px;width:2px;height:2px;background:#727574;"></div>
<div class="r" style="left:686.5px;top:552.4000000000001px;width:2px;height:2px;background:#727574;"></div>
<div class="r" style="left:700px;top:520px;width:1.6px;height:60px;background:#1c1e1e;"></div>
<div class="r" style="left:701.6px;top:549.8px;width:28.4px;height:1.8px;background:#1c1e1e;"></div>
<svg class="i" style="left:706.7px;top:524.6px;width:18px;height:18px;color:#f4f4f4;" viewBox="0 0 18 18"><use href="#link"/></svg>
<svg class="i" style="left:707.2px;top:557px;width:16px;height:16px;color:#f4f4f4;" viewBox="0 0 16 16"><use href="#gear"/></svg>
<div class="r" style="left:810px;top:520px;width:200px;height:60px;background:#3c403f;"></div>
<svg class="i" style="left:827.0px;top:530.8px;width:16px;height:16px;color:#f4f4f4;" viewBox="0 0 16 16"><use href="#script"/></svg>
<div class="t b" style="left:850.50px;top:534.52px;font-size:12.5px;font-weight:bold;color:#f4f4f4;letter-spacing:-0.4px;">SCRIPT</div>
<div class="t" style="left:850.50px;top:554.69px;font-size:11px;font-weight:normal;color:#9a9c9b;letter-spacing:-0.05px;">Note to CRM</div>
<div class="r" style="left:966.5px;top:543.2px;width:2px;height:2px;background:#727574;"></div>
<div class="r" style="left:966.5px;top:547.8000000000001px;width:2px;height:2px;background:#727574;"></div>
<div class="r" style="left:966.5px;top:552.4000000000001px;width:2px;height:2px;background:#727574;"></div>
<div class="r" style="left:980px;top:520px;width:1.6px;height:60px;background:#1c1e1e;"></div>
<div class="r" style="left:981.6px;top:549.8px;width:28.4px;height:1.8px;background:#1c1e1e;"></div>
<svg class="i" style="left:986.7px;top:524.6px;width:18px;height:18px;color:#f4f4f4;" viewBox="0 0 18 18"><use href="#link"/></svg>
<svg class="i" style="left:987.2px;top:557px;width:16px;height:16px;color:#f4f4f4;" viewBox="0 0 16 16"><use href="#gear"/></svg>
<svg class="i" style="left:423.4px;top:123.8px;width:14px;height:14px" viewBox="0 0 14 14"><circle cx="7" cy="7" r="5.6" fill="#6b6e6d" stroke="#0b0b0b" stroke-width="1.6"/></svg>
<svg class="i" style="left:583.4px;top:123.8px;width:14px;height:14px" viewBox="0 0 14 14"><circle cx="7" cy="7" r="5.6" fill="#6b6e6d" stroke="#0b0b0b" stroke-width="1.6"/></svg>
<svg class="i" style="left:423.4px;top:243.8px;width:14px;height:14px" viewBox="0 0 14 14"><circle cx="7" cy="7" r="5.6" fill="#6b6e6d" stroke="#0b0b0b" stroke-width="1.6"/></svg>
<svg class="i" style="left:423.4px;top:303.8px;width:14px;height:14px" viewBox="0 0 14 14"><circle cx="7" cy="7" r="5.6" fill="#6b6e6d" stroke="#0b0b0b" stroke-width="1.6"/></svg>
<svg class="i" style="left:523.4px;top:303.8px;width:14px;height:14px" viewBox="0 0 14 14"><circle cx="7" cy="7" r="5.6" fill="#6b6e6d" stroke="#0b0b0b" stroke-width="1.6"/></svg>
<svg class="i" style="left:423.4px;top:363.8px;width:14px;height:14px" viewBox="0 0 14 14"><circle cx="7" cy="7" r="5.6" fill="#6b6e6d" stroke="#0b0b0b" stroke-width="1.6"/></svg>
<svg class="i" style="left:523.4px;top:393.8px;width:14px;height:14px" viewBox="0 0 14 14"><circle cx="7" cy="7" r="5.6" fill="#6b6e6d" stroke="#0b0b0b" stroke-width="1.6"/></svg>
<svg class="i" style="left:423.4px;top:423.8px;width:14px;height:14px" viewBox="0 0 14 14"><circle cx="7" cy="7" r="5.6" fill="#6b6e6d" stroke="#0b0b0b" stroke-width="1.6"/></svg>
<svg class="i" style="left:523.4px;top:543.8px;width:14px;height:14px" viewBox="0 0 14 14"><circle cx="7" cy="7" r="5.6" fill="#6b6e6d" stroke="#0b0b0b" stroke-width="1.6"/></svg>
<svg class="i" style="left:723.4px;top:543.8px;width:14px;height:14px" viewBox="0 0 14 14"><circle cx="7" cy="7" r="5.6" fill="#6b6e6d" stroke="#0b0b0b" stroke-width="1.6"/></svg>
<svg class="i" style="left:803.4px;top:543.8px;width:14px;height:14px" viewBox="0 0 14 14"><circle cx="7" cy="7" r="5.6" fill="#6b6e6d" stroke="#0b0b0b" stroke-width="1.6"/></svg>
<div class="r" style="left:790px;top:100px;width:175px;height:360px;background:#3b3f3e;"></div>
<div class="r" style="left:790px;top:100px;width:1.6px;height:360px;background:#1c1e1e;"></div>
<div class="r" style="left:790px;top:129.2px;width:175px;height:1.8px;background:#1c1e1e;"></div>
<svg class="i" style="left:800.22px;top:106.02px;width:16.96px;height:16.96px;color:#f4f4f4;" viewBox="0 0 16.96 16.96"><use href="#entry"/></svg>
<div class="t b" style="left:832.00px;top:110.64px;font-size:12px;font-weight:bold;color:#f4f4f4;letter-spacing:-0.1px;">Entry</div>
<div class="r" style="left:791.6px;top:130px;width:173.4px;height:30px;background:#2b2e2e;"></div>
<div class="r" style="left:790px;top:159.2px;width:175px;height:1.8px;background:#1c1e1e;"></div>
<svg class="i" style="left:800.22px;top:138.14px;width:16.96px;height:12.72px;color:#8dc63f;" viewBox="0 0 16.96 12.72"><use href="#mail"/></svg>
<div class="t b" style="left:832.00px;top:140.64px;font-size:12px;font-weight:bold;color:#8dc63f;letter-spacing:-0.1px;">E-Mail Delivery</div>
<div class="r" style="left:790px;top:189.2px;width:175px;height:1.8px;background:#1c1e1e;"></div>
<svg class="i" style="left:800.22px;top:168.14px;width:16.96px;height:12.72px;color:#f4f4f4;" viewBox="0 0 16.96 12.72"><use href="#datafield"/></svg>
<div class="t b" style="left:832.00px;top:170.64px;font-size:12px;font-weight:bold;color:#f4f4f4;letter-spacing:-0.1px;">Set Datafield</div>
<div class="r" style="left:790px;top:219.2px;width:175px;height:1.8px;background:#1c1e1e;"></div>
<svg class="i" style="left:800.22px;top:196.02px;width:16.96px;height:16.96px;color:#f4f4f4;" viewBox="0 0 16.96 16.96"><use href="#group"/></svg>
<div class="t b" style="left:832.00px;top:200.64px;font-size:12px;font-weight:bold;color:#f4f4f4;letter-spacing:-0.1px;">Group Action</div>
<div class="r" style="left:790px;top:249.2px;width:175px;height:1.8px;background:#1c1e1e;"></div>
<svg class="i" style="left:801.2800000000001px;top:227.08px;width:14.84px;height:14.84px;color:#f4f4f4;" viewBox="0 0 14.84 14.84"><use href="#plane"/></svg>
<div class="t b" style="left:832.00px;top:230.64px;font-size:12px;font-weight:bold;color:#f4f4f4;letter-spacing:-0.1px;">Campaign Action</div>
<div class="r" style="left:790px;top:279.2px;width:175px;height:1.8px;background:#1c1e1e;"></div>
<svg class="i" style="left:800.22px;top:256.02px;width:16.96px;height:16.96px;color:#f4f4f4;" viewBox="0 0 16.96 16.96"><use href="#script"/></svg>
<div class="t b" style="left:832.00px;top:260.64px;font-size:12px;font-weight:bold;color:#f4f4f4;letter-spacing:-0.1px;">Script</div>
<div class="r" style="left:790px;top:309.2px;width:175px;height:1.8px;background:#1c1e1e;"></div>
<svg class="i" style="left:801.2800000000001px;top:286.55px;width:14.84px;height:15.9px;color:#f4f4f4;" viewBox="0 0 14.84 15.9"><use href="#filter"/></svg>
<div class="t b" style="left:832.00px;top:290.64px;font-size:12px;font-weight:bold;color:#f4f4f4;letter-spacing:-0.1px;">Filter</div>
<div class="r" style="left:790px;top:339.2px;width:175px;height:1.8px;background:#1c1e1e;"></div>
<svg class="i" style="left:801.2800000000001px;top:316.55px;width:14.84px;height:15.9px;color:#f4f4f4;" viewBox="0 0 14.84 15.9"><use href="#random"/></svg>
<div class="t b" style="left:832.00px;top:320.64px;font-size:12px;font-weight:bold;color:#f4f4f4;letter-spacing:-0.1px;">Random</div>
<div class="r" style="left:790px;top:369.2px;width:175px;height:1.8px;background:#1c1e1e;"></div>
<svg class="i" style="left:801.2800000000001px;top:346.55px;width:14.84px;height:15.9px;color:#f4f4f4;" viewBox="0 0 14.84 15.9"><use href="#response"/></svg>
<div class="t b" style="left:832.00px;top:350.64px;font-size:12px;font-weight:bold;color:#f4f4f4;letter-spacing:-0.1px;">Response Filter</div>
<div class="r" style="left:790px;top:399.2px;width:175px;height:1.8px;background:#1c1e1e;"></div>
<svg class="i" style="left:800.22px;top:376.02px;width:16.96px;height:16.96px;color:#f4f4f4;" viewBox="0 0 16.96 16.96"><use href="#alarm"/></svg>
<div class="t b" style="left:832.00px;top:380.64px;font-size:12px;font-weight:bold;color:#f4f4f4;letter-spacing:-0.1px;">Timer</div>
<div class="r" style="left:790px;top:429.2px;width:175px;height:1.8px;background:#1c1e1e;"></div>
<svg class="i" style="left:801.2800000000001px;top:407.08px;width:14.84px;height:14.84px;color:#f4f4f4;" viewBox="0 0 14.84 14.84"><use href="#calendar"/></svg>
<div class="t b" style="left:832.00px;top:410.64px;font-size:12px;font-weight:bold;color:#f4f4f4;letter-spacing:-0.1px;">Date Filter</div>
<svg class="i" style="left:801.2800000000001px;top:437.08px;width:14.84px;height:14.84px;color:#f4f4f4;" viewBox="0 0 14.84 14.84"><use href="#winner"/></svg>
<div class="t b" style="left:832.00px;top:440.64px;font-size:12px;font-weight:bold;color:#f4f4f4;letter-spacing:-0.1px;">Winnermail</div>
<svg class="i" style="left:850.5px;top:146px;width:15px;height:19px;color:#f4f4f4;" viewBox="0 0 15 19"><use href="#hand"/></svg>
</div>
</body></html>
